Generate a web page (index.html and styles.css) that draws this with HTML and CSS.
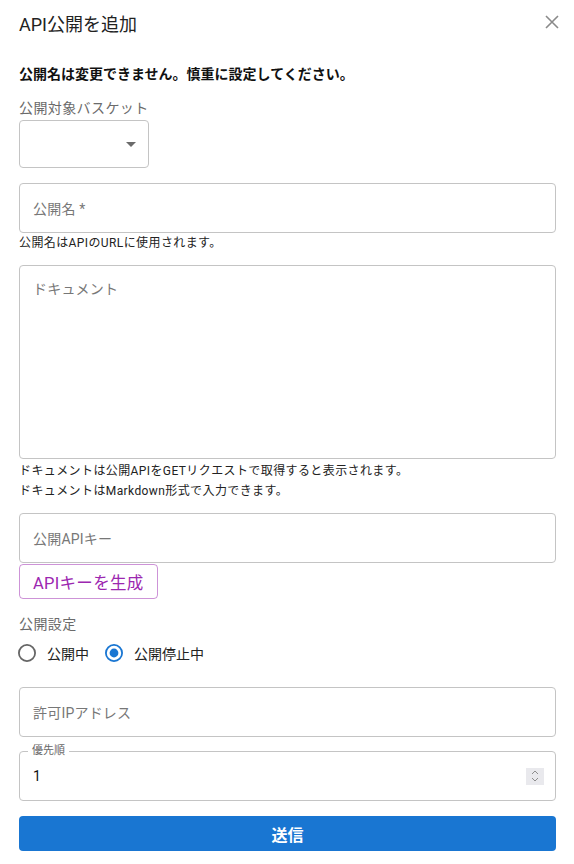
FILE: index.html
```html
<!DOCTYPE html>
<html lang="ja">
<head>
<meta charset="utf-8">
<link rel="stylesheet" href="styles.css">
</head>
<body>
<div class="dialog">
  <div class="header">
    <h2 class="title">API公開を追加</h2>
    <span class="close"><svg width="14" height="14" viewBox="0 0 14 14"><path d="M1 1L13 13M13 1L1 13" stroke="#8a8a8a" stroke-width="1.6" fill="none"/></svg></span>
  </div>
  <p class="notice">公開名は変更できません。慎重に設定してください。</p>
  <div class="label">公開対象バスケット</div>
  <div class="select"><svg width="10" height="5" viewBox="0 0 10 5"><path d="M0 0H10L5 5Z" fill="#6b6b6b"/></svg></div>
  <div class="field name"><span class="ph">公開名 *</span></div>
  <div class="helper">公開名はAPIのURLに使用されます。</div>
  <div class="field area"><span class="ph">ドキュメント</span></div>
  <div class="helper h2">ドキュメントは公開APIをGETリクエストで取得すると表示されます。<br>ドキュメントはMarkdown形式で入力できます。</div>
  <div class="field key"><span class="ph">公開APIキー</span></div>
  <div class="gen-row"><span class="gen">APIキーを生成</span></div>
  <div class="label l2">公開設定</div>
  <div class="radios">
    <span class="radio"><svg width="20" height="20" viewBox="0 0 20 20"><circle cx="10" cy="10" r="8.1" fill="none" stroke="#666" stroke-width="1.8"/></svg><span class="rtext">公開中</span></span>
    <span class="radio r2"><svg width="20" height="20" viewBox="0 0 20 20"><circle cx="10" cy="10" r="8.1" fill="none" stroke="#1976d2" stroke-width="1.8"/><circle cx="10" cy="10" r="4.4" fill="#1976d2"/></svg><span class="rtext">公開停止中</span></span>
  </div>
  <div class="field ip"><span class="ph">許可IPアドレス</span></div>
  <div class="field prio">
    <span class="notch">優先順</span>
    <span class="value">1</span>
    <span class="spin"><svg width="8" height="12" viewBox="0 0 8 12"><path d="M1 4L4 1L7 4M1 8L4 11L7 8" fill="none" stroke="#8d8d8d" stroke-width="1"/></svg></span>
  </div>
  <div class="submit">送信</div>
</div>
</body>
</html>
```

FILE: styles.css
```css
* { box-sizing: border-box; }
body {
  margin: 0;
  background: #fff;
  font-family: "Roboto", "Noto Sans CJK JP", sans-serif;
  color: rgba(0,0,0,0.87);
}
.dialog {
  width: 574px;
  padding: 0 18px 0 19px;
  display: flex;
  flex-direction: column;
}
.header {
  height: 50px;
  display: flex;
  align-items: center;
  justify-content: space-between;
  padding-bottom: 1px;
}
.title {
  margin: 0;
  font-size: 18px;
  font-weight: 400;
  line-height: 30px;
  color: #222;
}
.close {
  display: flex;
  margin-right: -3px;
  margin-top: -6px;
}
.notice {
  margin: 14px 0 0;
  font-size: 14px;
  font-weight: 700;
  line-height: 20px;
  color: #111;
}
.label {
  margin-top: 14px;
  font-size: 14px;
  letter-spacing: 0.4px;
  line-height: 20px;
  color: #6b6b6b;
}
.select {
  margin-top: 2px;
  width: 130px;
  height: 48px;
  border: 1px solid #c4c4c4;
  border-radius: 4px;
  display: flex;
  align-items: center;
  justify-content: flex-end;
  padding-right: 12px;
}
.field {
  border: 1px solid #c4c4c4;
  border-radius: 4px;
  height: 50px;
  padding: 0 13px;
  display: flex;
  align-items: center;
}
.ph {
  font-size: 14px;
  color: #777;
  letter-spacing: 0.2px;
}
.name { margin-top: 15px; }
.helper {
  font-size: 12px;
  line-height: 20px;
  letter-spacing: 0.4px;
  color: #222;
}
.area {
  margin-top: 12px;
  height: 194px;
  align-items: flex-start;
  padding-top: 12px;
}
.h2 { margin-top: 2px; }
.key { margin-top: 12px; }
.gen-row { margin-top: 1px; display: flex; }
.gen {
  height: 35px;
  padding: 0 13px;
  border: 1px solid rgba(156,39,176,0.5);
  border-radius: 4px;
  color: #9c27b0;
  font-size: 16.5px;
  font-weight: 400;
  letter-spacing: 0.3px;
  display: flex;
  align-items: center;
}
.l2 { margin-top: 15px; }
.radios {
  margin-top: 7px;
  height: 24px;
  display: flex;
  align-items: center;
}
.radio {
  display: flex;
  align-items: center;
  font-size: 14px;
  color: #222;
}
.radio svg { display: block; margin-left: -2px; }
.rtext { margin-left: 10px; }
.r2 { margin-left: 17px; }
.ip { margin-top: 22px; }
.prio {
  margin-top: 14px;
  position: relative;
  height: 50px;
}
.notch {
  position: absolute;
  left: 8px;
  top: -8px;
  padding: 0 4px;
  background: #fff;
  font-size: 11px;
  line-height: 14px;
  color: #666;
}
.value {
  font-size: 14px;
  color: #111;
  flex: 1;
}
.spin {
  width: 18px;
  height: 17px;
  background: #e9e9ed;
  display: flex;
  align-items: center;
  justify-content: center;
  margin-right: -2px;
}
.submit {
  margin-top: 15px;
  height: 35px;
  background: #1976d2;
  border-radius: 4px;
  color: #fff;
  font-size: 16px;
  font-weight: 700;
  display: flex;
  align-items: center;
  justify-content: center;
}
```
